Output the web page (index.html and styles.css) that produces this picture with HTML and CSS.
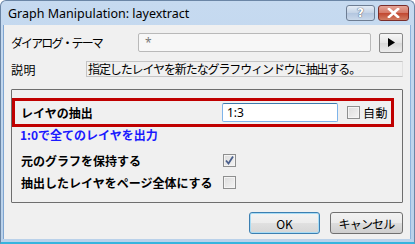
FILE: index.html
```html
<!DOCTYPE html>
<html lang="ja">
<head>
  <meta charset="UTF-8">
  <title>Graph Manipulation: layextract</title>
  <link rel="stylesheet" href="styles.css">
</head>
<body>
  <div class="window">
    <div class="titlebar">
      <span class="title">Graph Manipulation: layextract</span>
      <div class="caption-buttons">
        <span class="cap-btn help">?</span>
        <span class="cap-btn close">
          <svg width="13" height="10" viewBox="0 0 13 10">
            <path d="M2 1 L11 9 M11 1 L2 9" stroke="#fff" stroke-width="2.6" stroke-linecap="square"/>
          </svg>
        </span>
      </div>
    </div>

    <div class="client">
      <div class="row theme-row">
        <span class="label theme-label">ダイアログ・テーマ</span>
        <div class="theme-box">*</div>
        <button class="arrow-btn">
          <svg width="7" height="9" viewBox="0 0 7 9"><path d="M0 0 L7 4.5 L0 9 Z" fill="#000"/></svg>
        </button>
      </div>

      <div class="row desc-row">
        <span class="label desc-label">説明</span>
        <div class="desc-box">指定したレイヤを新たなグラフウィンドウに抽出する。</div>
      </div>

      <div class="group">
        <div class="highlight">
          <span class="opt-label">レイヤの抽出</span>
          <input class="range-input" type="text" value="1:3">
          <span class="check"></span>
          <span class="check-text">自動</span>
        </div>
        <div class="hint">1:0で全てのレイヤを出力</div>
        <div class="opt-row first">
          <span class="opt-label">元のグラフを保持する</span>
          <span class="check checked">
            <svg width="11" height="11" viewBox="0 0 11 11"><path d="M2 5.5 L4.5 8.5 L9 1.5" stroke="#4a5f8c" stroke-width="1.8" fill="none"/></svg>
          </span>
        </div>
        <div class="opt-row">
          <span class="opt-label">抽出したレイヤをページ全体にする</span>
          <span class="check"></span>
        </div>
      </div>

      <div class="buttons">
        <button class="btn default">OK</button>
        <button class="btn cancel">キャンセル</button>
      </div>
    </div>
  </div>
</body>
</html>
```

FILE: styles.css
```css
body {
  margin: 0;
  background: #fff;
  font-family: "Noto Sans CJK JP", "Noto Sans", sans-serif;
  font-size: 12px;
  color: #000;
}
.window {
  width: 415px;
  height: 244px;
  box-sizing: border-box;
  display: flex;
  flex-direction: column;
  padding: 0 3px 3px 2px;
  background: linear-gradient(#c6daf0, #b9d1ea);
  border: 1px solid #6b86a6;
  border-bottom: 2px solid #36b4de;
  border-radius: 6px 6px 0 0;
}
.titlebar {
  height: 24px;
  display: flex;
  align-items: flex-start;
  justify-content: space-between;
}
.title {
  font-family: "Noto Sans", sans-serif;
  font-size: 12.5px;
  margin: 4px 0 0 5px;
  color: #000;
}
.caption-buttons {
  display: flex;
  gap: 3px;
  margin-top: 4px;
  margin-right: 2px;
}
.cap-btn {
  height: 16px;
  box-sizing: border-box;
  border: 1px solid #6d7d93;
  border-radius: 3px;
  display: flex;
  align-items: center;
  justify-content: center;
}
.help {
  width: 29px;
  background: linear-gradient(#e4ecf6, #c3d2e5 50%, #b3c6df 51%, #c9d8ea);
  color: #fff;
  font-family: "DejaVu Sans", sans-serif;
  font-weight: bold;
  font-size: 12px;
  text-shadow: 0 0 1px #45526a, 0 0 1px #45526a;
}
.close {
  width: 31px;
  border-color: #7a2d2a;
  background: linear-gradient(#e4a597, #d57866 50%, #c1472f 51%, #d17d63);
}
.client {
  flex: 1;
  background: #f0f0f0;
  border-left: 1px solid #7ea5d1;
  border-right: 1px solid #8db3dc;
  display: flex;
  flex-direction: column;
  padding: 8px 7px 0 7px;
}
.row {
  display: flex;
  align-items: center;
}
.label {
  font-size: 12px;
}
.theme-row {
  height: 19px;
}
.theme-label {
  width: 127px;
  letter-spacing: -1.9px;
}
.theme-box {
  width: 233px;
  height: 19px;
  box-sizing: border-box;
  border: 1px solid #b9b9b9;
  border-radius: 2px;
  background: #f7f7f7;
  color: #777;
  font-family: "Noto Sans", sans-serif;
  padding-left: 6px;
  line-height: 17px;
}
.arrow-btn {
  margin-left: auto;
  width: 24px;
  height: 20px;
  box-sizing: border-box;
  border: 1px solid #8a8a8a;
  border-radius: 2px;
  background: linear-gradient(#f6f6f6, #e4e4e4 50%, #d8d8d8 51%, #ececec);
  display: flex;
  align-items: center;
  justify-content: center;
  padding: 0;
}
.desc-row {
  margin-top: 9px;
  height: 16px;
}
.desc-label {
  width: 75px;
  letter-spacing: 0.5px;
}
.desc-box {
  flex: 1;
  height: 16px;
  box-sizing: border-box;
  border: 1px solid #c4c4c4;
  border-right-color: #e0e0e0;
  padding-left: 1px;
  line-height: 14px;
  letter-spacing: -1.1px;
  white-space: nowrap;
  overflow: hidden;
}
.group {
  margin-top: 12px;
  height: 114px;
  box-sizing: border-box;
  border: 1px solid #6e6e6e;
  border-radius: 1px;
  padding: 8px 0 0 0;
}
.highlight {
  width: 382px;
  height: 29px;
  box-sizing: border-box;
  border: 3px solid #c00000;
  display: flex;
  align-items: center;
  padding-left: 6px;
}
.opt-label {
  font-weight: bold;
  font-size: 12px;
  width: 202px;
  flex: none;
}
.highlight .opt-label {
  width: 201px;
}
.range-input {
  width: 116px;
  height: 19px;
  box-sizing: border-box;
  border: 1px solid #7eb4ea;
  border-top-color: #3d7bad;
  border-radius: 2px;
  font-family: "Noto Sans", sans-serif;
  font-size: 12px;
  padding: 0 0 0 4px;
  margin: 0;
  outline: none;
}
.check {
  width: 13px;
  height: 13px;
  box-sizing: border-box;
  border: 1px solid #8e8f8f;
  background: linear-gradient(135deg, #dcdcdc, #f4f4f4);
  box-shadow: inset 0 0 0 1px #f4f4f4;
  display: flex;
  align-items: center;
  justify-content: center;
  flex: none;
}
.highlight .check {
  margin-left: 9px;
}
.check-text {
  margin-left: 3px;
  font-size: 12px;
  letter-spacing: 0.5px;
}
.hint {
  color: #1a1aff;
  font-weight: bold;
  margin: -1px 0 0 8px;
  height: 17px;
  line-height: 17px;
}
.opt-row {
  display: flex;
  align-items: center;
  height: 22px;
  padding-left: 9px;
}
.opt-row.first {
  margin-top: 6px;
}
.buttons {
  display: flex;
  justify-content: flex-end;
  gap: 10px;
  margin-top: 9px;
}
.btn {
  height: 22px;
  box-sizing: border-box;
  border: 1px solid #707070;
  border-radius: 3px;
  background: linear-gradient(#f2f2f2, #ebebeb 50%, #dddddd 51%, #cfcfcf);
  font-family: "Noto Sans CJK JP", "Noto Sans", sans-serif;
  font-size: 12px;
  padding: 0;
  color: #000;
}
.default {
  width: 71px;
  border-color: #3c7fb1;
  box-shadow: inset 0 0 0 1px #a8dcf5;
  background: linear-gradient(#f4f4f4, #ececec 50%, #e0e0e0 51%, #d6d6d6);
}
.cancel {
  width: 73px;
  letter-spacing: -0.8px;
}
```
